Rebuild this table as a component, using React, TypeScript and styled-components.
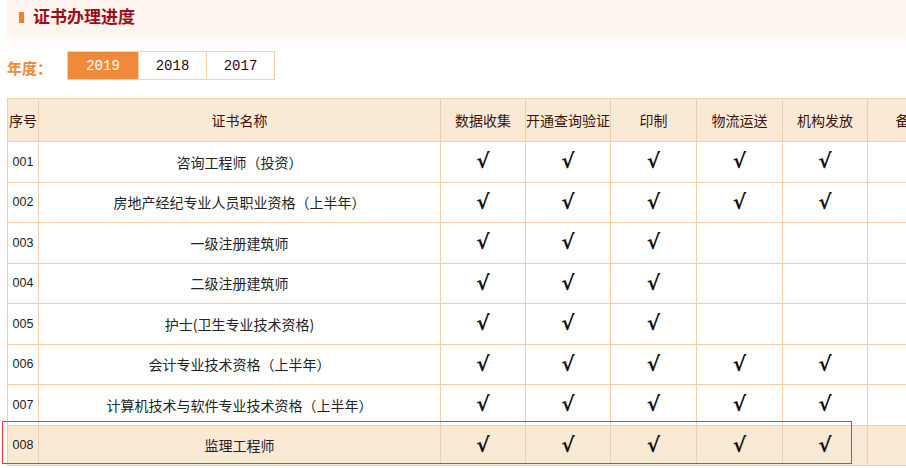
import React, { FC } from 'react';
import styled, { createGlobalStyle } from 'styled-components';

const GlobalStyle = createGlobalStyle`
  html, body {
    margin: 0;
    padding: 0;
    overflow: hidden;
    background: #fff;
  }
  body {
    font-family: "Liberation Sans", "Noto Sans CJK SC", sans-serif;
  }
`;

const Page = styled.div`
  position: relative;
  width: 906px;
  height: 468px;
  padding-left: 7px;
  box-sizing: border-box;
  overflow: hidden;
`;

const TitleBand = styled.div`
  height: 51px;
  padding: 6px 0 0 12px;
  box-sizing: border-box;
  background: linear-gradient(to bottom, #fdf5ee 0%, #fdf6f0 60%, #ffffff 100%);
  display: flex;
  align-items: flex-start;
`;

const TitleMark = styled.span`
  width: 5px;
  height: 11px;
  margin-top: 6px;
  background: #f08020;
`;

const Title = styled.h2`
  margin: 0 0 0 9px;
  font-size: 17px;
  line-height: 20px;
  font-weight: bold;
  color: #9a0f1c;
  font-family: "Noto Sans CJK SC", sans-serif;
`;

const YearRow = styled.div`
  display: flex;
  align-items: center;
  height: 29px;
`;

const YearLabel = styled.span`
  width: 60px;
  font-size: 15px;
  font-weight: bold;
  color: #e98a3c;
  font-family: "Noto Sans CJK SC", sans-serif;
  margin-top: 3px;
`;

const Tabs = styled.div`
  display: flex;
  height: 29px;
  border: 1px solid #f5cfa8;
  box-sizing: border-box;
`;

const Tab = styled.button<{ $active?: boolean }>`
  width: ${({ $active }) => ($active ? '70px' : '68px')};
  height: 100%;
  border: none;
  border-left: ${({ $active }) => ($active ? 'none' : '1px solid #f5cfa8')};
  padding: 0;
  background: ${({ $active }) => ($active ? '#f08a38' : '#fff')};
  color: ${({ $active }) => ($active ? '#fff' : '#2a0808')};
  font-family: "Liberation Mono", monospace;
  font-size: 14px;
  cursor: pointer;
`;

const Table = styled.table`
  margin-top: 18px;
  width: 944px;
  table-layout: fixed;
  border-collapse: collapse;
  font-family: "Noto Sans CJK SC", sans-serif;
`;

const HeadCell = styled.th`
  height: 42px;
  padding: 0;
  background: #faead5;
  border: 1px solid #f2cfaa;
  font-weight: normal;
  font-size: 14px;
  color: #3a1208;
  text-align: center;
  white-space: nowrap;
  overflow: hidden;
`;

const Row = styled.tr<{ $hover?: boolean }>`
  height: 40.5px;
  background: ${({ $hover }) => ($hover ? '#faead5' : '#fff')};
`;

const Cell = styled.td`
  padding: 0;
  border: 1px solid #f2cfaa;
  font-size: 14px;
  color: #222;
  text-align: center;
  white-space: nowrap;
  line-height: 20px;
`;

const NumCell = styled(Cell)`
  font-family: "Liberation Sans", sans-serif;
  font-size: 12.5px;
`;

const Check = styled.span`
  font-family: "DejaVu Sans", sans-serif;
  font-size: 20px;
  font-weight: bold;
  color: #111;
`;

const Marker = styled.div`
  position: absolute;
  left: 2px;
  top: 421px;
  width: 850px;
  height: 43px;
  border: 1.5px solid #e8393e;
  box-sizing: border-box;
  pointer-events: none;
`;

const columns = ['数据收集', '开通查询验证', '印制', '物流运送', '机构发放'];
const widths = [31, 402, 85, 85, 86, 86, 85, 84];

interface ICert {
  no: string;
  name: string;
  steps: number;
}

const certs: ICert[] = [
  { no: '001', name: '咨询工程师（投资）', steps: 5 },
  { no: '002', name: '房地产经纪专业人员职业资格（上半年）', steps: 5 },
  { no: '003', name: '一级注册建筑师', steps: 3 },
  { no: '004', name: '二级注册建筑师', steps: 3 },
  { no: '005', name: '护士(卫生专业技术资格)', steps: 3 },
  { no: '006', name: '会计专业技术资格（上半年）', steps: 5 },
  { no: '007', name: '计算机技术与软件专业技术资格（上半年）', steps: 5 },
  { no: '008', name: '监理工程师', steps: 5 },
];

const years = ['2019', '2018', '2017'];

const App: FC = () => {
  return (
    <Page>
      <GlobalStyle />
      <TitleBand>
        <TitleMark />
        <Title>证书办理进度</Title>
      </TitleBand>

      <YearRow>
        <YearLabel>年度：</YearLabel>
        <Tabs>
          {years.map((y, i) => (
            <Tab key={y} $active={i === 0}>
              {y}
            </Tab>
          ))}
        </Tabs>
      </YearRow>

      <Table>
        <colgroup>
          {widths.map((w, i) => (
            <col key={i} style={{ width: w }} />
          ))}
        </colgroup>
        <thead>
          <tr>
            <HeadCell>序号</HeadCell>
            <HeadCell>证书名称</HeadCell>
            {columns.map((c) => (
              <HeadCell key={c}>{c}</HeadCell>
            ))}
            <HeadCell>备注</HeadCell>
          </tr>
        </thead>
        <tbody>
          {certs.map((cert, index) => (
            <Row key={cert.no} $hover={index === certs.length - 1}>
              <NumCell>{cert.no}</NumCell>
              <Cell>{cert.name}</Cell>
              {columns.map((c, i) => (
                <Cell key={c}>{i < cert.steps && <Check>√</Check>}</Cell>
              ))}
              <Cell />
            </Row>
          ))}
        </tbody>
      </Table>

      <Marker />
    </Page>
  );
};

export default App;
